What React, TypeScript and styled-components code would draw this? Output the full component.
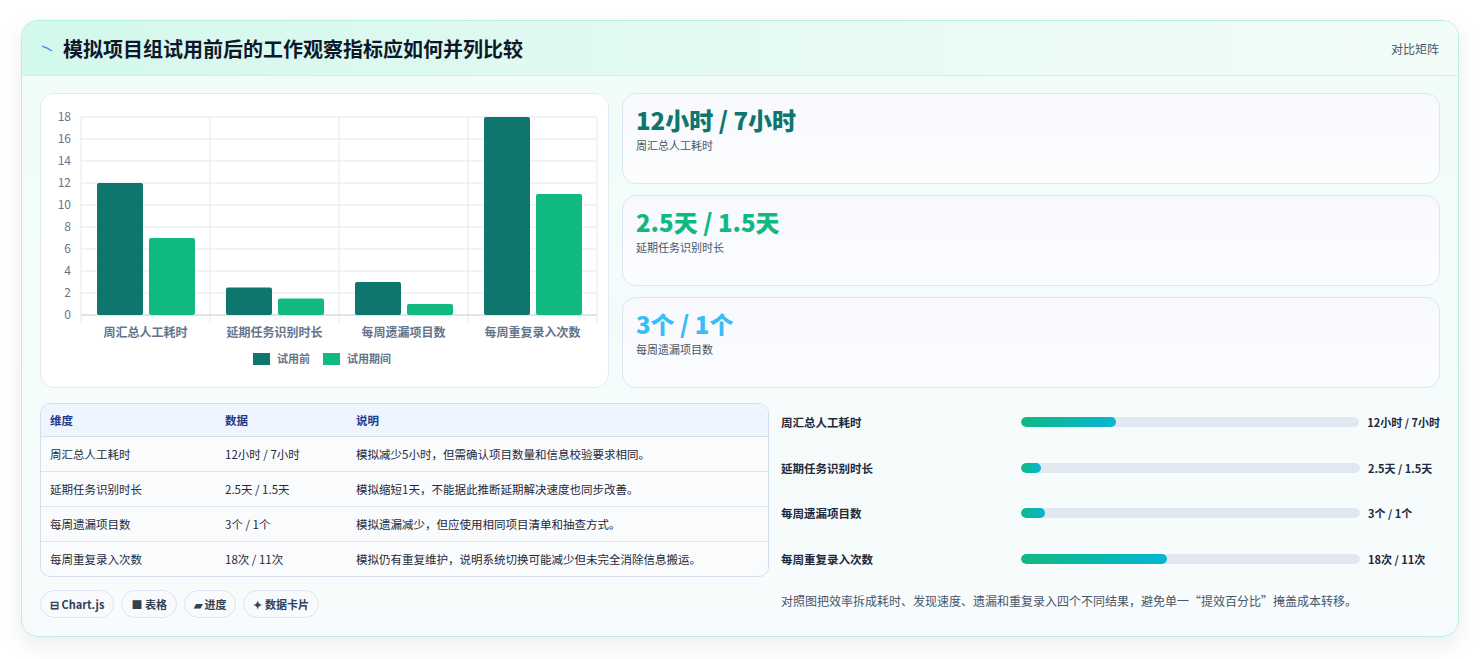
import React from "react";
import styled, { createGlobalStyle } from "styled-components";

const Global = createGlobalStyle`
  html, body { margin: 0; padding: 0; background: #f3f5f7; }
  body { font-family: "Noto Sans CJK SC", "Noto Sans", sans-serif; color: #1e293b; }
`;

const Page = styled.div`
  padding: 20px 21px 22px 21px;
  height: 659px;
  box-sizing: border-box;
  background: #fff;
`;
const Card = styled.div`
  border: 1px solid #b9efe2;
  border-radius: 16px;
  background: linear-gradient(180deg, #f0fdf8 0%, #f8fbfd 100%);
  box-shadow: 0 8px 24px rgba(15, 23, 42, 0.08);
  overflow: hidden;
  height: 617px;
  box-sizing: border-box;
`;
const Header = styled.div`
  height: 55px;
  box-sizing: border-box;
  display: flex;
  align-items: center;
  justify-content: space-between;
  padding: 0 19px;
  background: linear-gradient(90deg, #d3f8ec 0%, #e8fbf3 60%, #f2fcf8 100%);
  border-bottom: 1px solid #d6ece6;
`;
const Title = styled.h1`
  margin: 0;
  font-size: 20px;
  font-weight: 700;
  color: #0f172a;
  display: flex;
  align-items: center;
  gap: 10px;
`;
const Tag = styled.span`
  font-size: 12px;
  color: #475569;
`;
const Body = styled.div`
  padding: 17px 18px 0 18px;
  display: flex;
  flex-direction: column;
  gap: 15px;
`;
const TopGrid = styled.div`
  display: grid;
  grid-template-columns: 569px 1fr;
  gap: 13px;
`;
const Panel = styled.div`
  background: #fff;
  border: 1px solid #e0ebf0;
  border-radius: 14px;
  height: 295px;
  box-sizing: border-box;
`;
const Stats = styled.div`
  display: flex;
  flex-direction: column;
  gap: 11px;
`;
const Stat = styled.div`
  height: 91px;
  box-sizing: border-box;
  border: 1px solid #dbe8f0;
  border-radius: 14px;
  background: linear-gradient(180deg, #f7f9fd, #fbfdff);
  padding: 10px 13px;
`;
const StatValue = styled.div<{ $c: string }>`
  font-size: 24px;
  font-weight: 800;
  color: ${(p) => p.$c};
  line-height: 32px;
`;
const StatLabel = styled.div`
  font-size: 11px;
  color: #475569;
  margin-top: 1px;
`;
const BottomGrid = styled.div`
  display: grid;
  grid-template-columns: 729px 1fr;
  gap: 12px;
`;
const Left = styled.div`
  display: flex;
  flex-direction: column;
  gap: 13px;
`;
const Table = styled.table`
  width: 100%;
  border-collapse: separate;
  border-spacing: 0;
  border: 1px solid #d3dfea;
  border-radius: 10px;
  overflow: hidden;
  font-size: 11.5px;
  background: #f9fbfc;
`;
const Th = styled.th`
  text-align: left;
  font-weight: 600;
  color: #1e3a8a;
  background: #eef5fe;
  height: 32px;
  padding: 0 9px;
  border-bottom: 1px solid #d3dfea;
`;
const Td = styled.td<{ $last?: boolean }>`
  height: 34px;
  padding: 0 9px;
  color: #1e293b;
  border-bottom: ${(p) => (p.$last ? "none" : "1px solid #dfe7ee")};
`;
const Chips = styled.div`
  display: flex;
  gap: 7px;
`;
const Chip = styled.span`
  height: 28px;
  box-sizing: border-box;
  padding: 0 9px;
  border: 1px solid #dde5ec;
  border-radius: 14px;
  background: #f8fafc;
  font-size: 11px;
  color: #334155;
  display: inline-flex;
  align-items: center;
  gap: 3px;
  font-weight: 600;
`;
const Right = styled.div`
  display: flex;
  flex-direction: column;
  margin-top: -4px;
`;
const BarRow = styled.div`
  display: flex;
  align-items: center;
  height: 45.7px;
`;
const BarLabel = styled.div`
  width: 240px;
  font-size: 11.5px;
  font-weight: 600;
  color: #1e293b;
`;
const Track = styled.div`
  flex: 1;
  height: 10px;
  border-radius: 5px;
  background: #e2e8f0;
  overflow: hidden;
`;
const Fill = styled.div`
  height: 100%;
  border-radius: 5px;
  background: linear-gradient(90deg, #10b981, #06b6d4);
`;
const BarValue = styled.div`
  font-size: 11px;
  font-weight: 700;
  color: #1e293b;
  padding-left: 8px;
  min-width: 72px;
  text-align: left;
`;
const Note = styled.p`
  margin: 10px 0 0;
  font-size: 12px;
  color: #475569;
`;

const cats = ["周汇总人工耗时", "延期任务识别时长", "每周遗漏项目数", "每周重复录入次数"];
const before = [12, 2.5, 3, 18];
const after = [7, 1.5, 1, 11];

function Chart() {
  const L = 40, R = 556, T = 23, B = 221;
  const u = (B - T) / 18;
  const cw = (R - L) / 4;
  return (
    <svg width="567" height="293" style={{ display: "block" }} fontFamily="'Noto Sans CJK SC', sans-serif">
      {[0, 2, 4, 6, 8, 10, 12, 14, 16, 18].map((v) => (
        <g key={v}>
          <line x1={L} x2={R} y1={B - v * u} y2={B - v * u} stroke="#e5e7eb" />
          <text x={30} y={B - v * u + 4} fontSize="12" fill="#64748b" textAnchor="end">{v}</text>
        </g>
      ))}
      {[0, 1, 2, 3, 4].map((i) => (
        <line key={i} x1={L + i * cw} x2={L + i * cw} y1={T} y2={B + 8} stroke="#e5e7eb" />
      ))}
      <line x1={L} x2={R} y1={B} y2={B} stroke="#cbd5e1" />
      {cats.map((c, i) => {
        const x0 = L + i * cw;
        return (
          <g key={c}>
            <rect x={x0 + 16} y={B - before[i] * u} width={46} height={before[i] * u} rx="2" fill="#0f766e" />
            <rect x={x0 + 68} y={B - after[i] * u} width={46} height={after[i] * u} rx="2" fill="#10b981" />
            <text x={x0 + cw / 2} y={243} fontSize="12" fill="#64748b" textAnchor="middle" fontWeight="600">{c}</text>
          </g>
        );
      })}
      <rect x={212} y={259} width={17} height={12} fill="#0f766e" />
      <text x={236} y={269} fontSize="11" fill="#64748b" fontWeight="600">试用前</text>
      <rect x={282} y={259} width={17} height={12} fill="#10b981" />
      <text x={306} y={269} fontSize="11" fill="#64748b" fontWeight="600">试用期间</text>
    </svg>
  );
}

const rows = [
  ["周汇总人工耗时", "12小时 / 7小时", "模拟减少5小时，但需确认项目数量和信息校验要求相同。", 28, "12小时 / 7小时"],
  ["延期任务识别时长", "2.5天 / 1.5天", "模拟缩短1天，不能据此推断延期解决速度也同步改善。", 6, "2.5天 / 1.5天"],
  ["每周遗漏项目数", "3个 / 1个", "模拟遗漏减少，但应使用相同项目清单和抽查方式。", 7, "3个 / 1个"],
  ["每周重复录入次数", "18次 / 11次", "模拟仍有重复维护，说明系统切换可能减少但未完全消除信息搬运。", 43, "18次 / 11次"],
] as const;

export default function App() {
  return (
    <Page>
      <Global />
      <Card>
        <Header>
          <Title>
            <svg width="12" height="8" viewBox="0 0 12 8">
              <path d="M1 2 L5 4 L4 3 L11 7 M6 4 L8 5" stroke="#3b82f6" strokeWidth="1.3" fill="none" />
            </svg>
            模拟项目组试用前后的工作观察指标应如何并列比较
          </Title>
          <Tag>对比矩阵</Tag>
        </Header>
        <Body>
          <TopGrid>
            <Panel>
              <Chart />
            </Panel>
            <Stats>
              <Stat>
                <StatValue $c="#0f766e">12小时 / 7小时</StatValue>
                <StatLabel>周汇总人工耗时</StatLabel>
              </Stat>
              <Stat>
                <StatValue $c="#10b981">2.5天 / 1.5天</StatValue>
                <StatLabel>延期任务识别时长</StatLabel>
              </Stat>
              <Stat>
                <StatValue $c="#38bdf8">3个 / 1个</StatValue>
                <StatLabel>每周遗漏项目数</StatLabel>
              </Stat>
            </Stats>
          </TopGrid>
          <BottomGrid>
            <Left>
              <Table>
                <thead>
                  <tr>
                    <Th style={{ width: 157 }}>维度</Th>
                    <Th style={{ width: 113 }}>数据</Th>
                    <Th>说明</Th>
                  </tr>
                </thead>
                <tbody>
                  {rows.map((r, i) => (
                    <tr key={r[0]}>
                      <Td $last={i === 3}>{r[0]}</Td>
                      <Td $last={i === 3}>{r[1]}</Td>
                      <Td $last={i === 3}>{r[2]}</Td>
                    </tr>
                  ))}
                </tbody>
              </Table>
              <Chips>
                <Chip>⊟ Chart.js</Chip>
                <Chip>■ 表格</Chip>
                <Chip>▰ 进度</Chip>
                <Chip>✦ 数据卡片</Chip>
              </Chips>
            </Left>
            <Right>
              {rows.map((r) => (
                <BarRow key={r[0]}>
                  <BarLabel>{r[0]}</BarLabel>
                  <Track>
                    <Fill style={{ width: `${r[3]}%` }} />
                  </Track>
                  <BarValue>{r[4]}</BarValue>
                </BarRow>
              ))}
              <Note>对照图把效率拆成耗时、发现速度、遗漏和重复录入四个不同结果，避免单一“提效百分比”掩盖成本转移。</Note>
            </Right>
          </BottomGrid>
        </Body>
      </Card>
    </Page>
  );
}
